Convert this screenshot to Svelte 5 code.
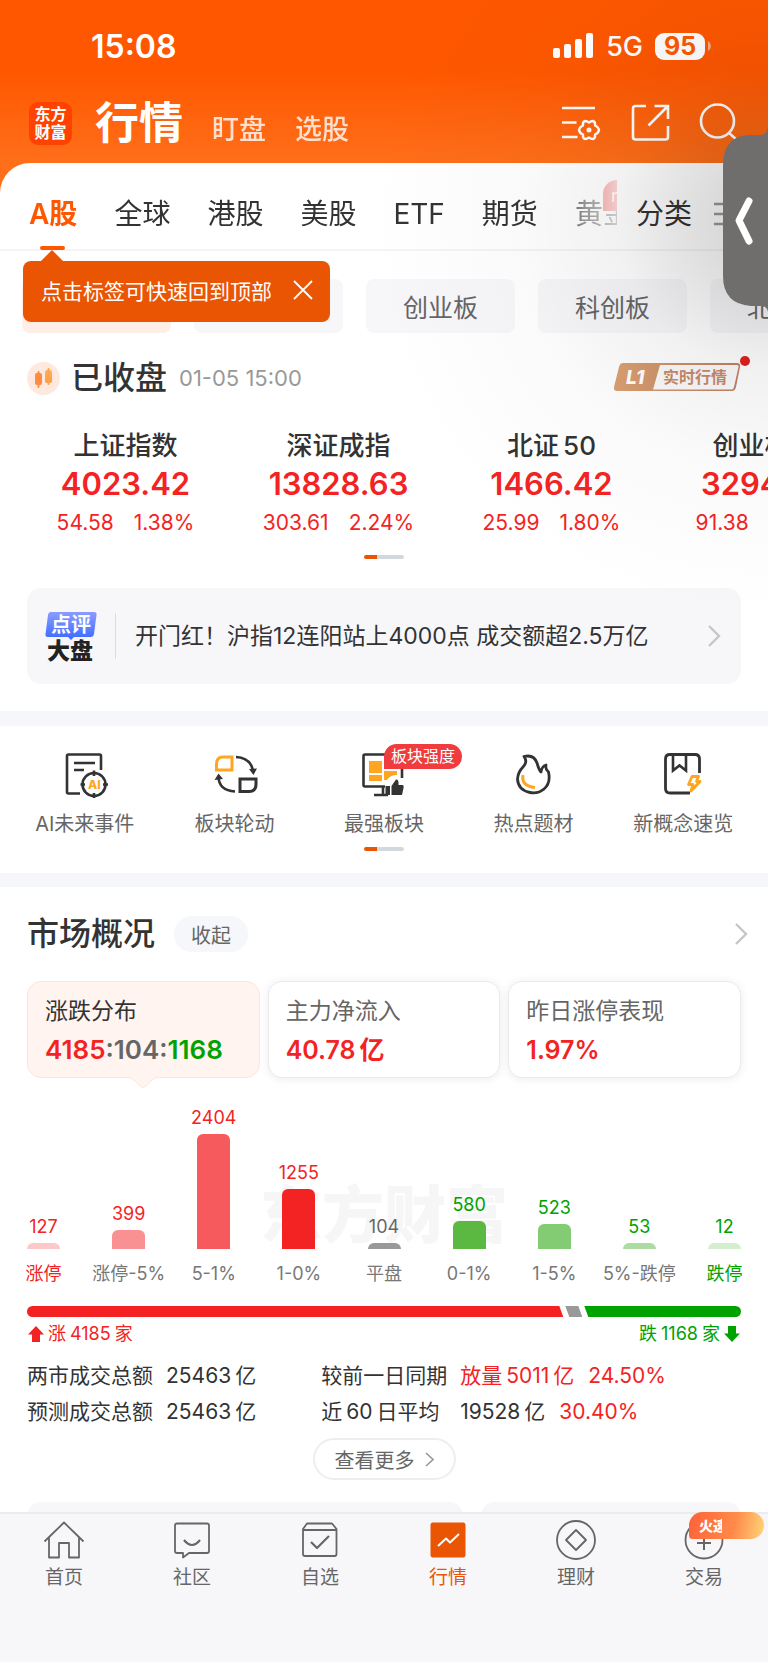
<script>
  const tabs = ['A股', '全球', '港股', '美股', 'ETF', '期货', '黄金'];
  const chips = ['沪深京', '沪深', '创业板', '科创板', '北交所'];
  const indices = [
    { name: ['上证指数'], value: '4023.42', diff: '54.58', pct: '1.38%' },
    { name: ['深证成指'], value: '13828.63', diff: '303.61', pct: '2.24%' },
    { name: ['北证', '50'], value: '1466.42', diff: '25.99', pct: '1.80%' },
    { name: ['创业板指'], value: '3294.55', diff: '91.38', pct: '2.85%' }
  ];
  const tools = [
    { id: 'ai', label: 'AI未来事件' },
    { id: 'rotate', label: '板块轮动' },
    { id: 'strong', label: '最强板块', tag: '板块强度' },
    { id: 'fire', label: '热点题材' },
    { id: 'book', label: '新概念速览' }
  ];
  const bars = [
    { n: 127, h: 6, label: '涨停', color: '#fcc8c8', text: 'up', strong: true },
    { n: 399, h: 19, label: '涨停-5%', color: '#f99193', text: 'up' },
    { n: 2404, h: 115, label: '5-1%', color: '#f75a5c', text: 'up' },
    { n: 1255, h: 60, label: '1-0%', color: '#f42323', text: 'up' },
    { n: 104, h: 6, label: '平盘', color: '#999999', text: 'flat' },
    { n: 580, h: 28, label: '0-1%', color: '#5bb942', text: 'down' },
    { n: 523, h: 25, label: '1-5%', color: '#84cc74', text: 'down' },
    { n: 53, h: 6, label: '5%-跌停', color: '#addca3', text: 'down' },
    { n: 12, h: 6, label: '跌停', color: '#d5eed0', text: 'down', strong: true }
  ];
  const nav = [
    { id: 'home', label: '首页' },
    { id: 'chat', label: '社区' },
    { id: 'pick', label: '自选' },
    { id: 'market', label: '行情' },
    { id: 'wealth', label: '理财' },
    { id: 'trade', label: '交易' }
  ];
  let tip = $state(true);
</script>

<div class="page">
  <header class="top">
    <div class="status">
      <span class="time">15:08</span>
      <div class="signal">
        <svg width="40" height="26" viewBox="0 0 40 26" fill="#fff">
          <rect x="0" y="15" width="7" height="10" rx="2" /><rect x="11" y="11" width="7" height="14" rx="2" />
          <rect x="22" y="6" width="7" height="19" rx="2" /><rect x="33" y="0" width="7" height="25" rx="2" />
        </svg>
        <span class="net">5G</span>
        <span class="battery">95</span>
        <svg width="4" height="10" viewBox="0 0 4 10"><path d="M1 0Q4 2 4 5T1 10z" fill="#fff" opacity=".5" /></svg>
      </div>
    </div>
    <div class="bar">
      <div class="logo"><span>东方</span><span>财富</span></div>
      <nav class="titles">
        <h1>行情</h1>
        <a href="#watch">盯盘</a>
        <a href="#pick">选股</a>
      </nav>
      <div class="actions">
        <button aria-label="设置">
          <svg width="40" height="40" viewBox="0 0 40 40" fill="none" stroke="#fff" stroke-width="2.6">
            <path d="M1 5H34M1 19.500H15.500M1 34H16.500" />
            <path stroke-linejoin="round" stroke-width="2.400" d="M24 18Q26 18 28 19.500Q30 18 32 18Q34.500 18.500 34 22.500Q37.500 24 38 27Q37.500 30 34 31.500Q34.500 35.500 32 36Q30 36 28 34.500Q26 36 24 36Q21.500 35.500 22 31.500Q18.500 30 18 27Q18.500 24 22 22.500Q21.500 18.500 24 18z" />
            <circle cx="28" cy="27" r="1.500" fill="#fff" stroke-width="2" />
          </svg>
        </button>
        <button aria-label="分享">
          <svg width="40" height="40" viewBox="0 0 40 40" fill="none" stroke="#fff" stroke-width="2.600">
            <path stroke-linejoin="round" d="M16 3H5.500Q3 3 3 5.500V34Q3 36.500 5.500 36.500H35.500Q38 36.500 38 34V23" />
            <path d="M24.500 3H38V16M38 3L18.500 22.500" />
          </svg>
        </button>
        <button aria-label="搜索">
          <svg width="40" height="40" viewBox="0 0 40 40" fill="none" stroke="#fff" stroke-width="2.600">
            <circle cx="18.500" cy="18" r="16.500" /><path d="M30 30L38 37" />
          </svg>
        </button>
      </div>
    </div>
  </header>

  <main>
    <div class="sheet">
      <div class="tabrow">
        <nav class="tabs">
          {#each tabs as t, i}
            <a href="#tab{i}" class:active={i === 0}>{t}{#if i === 6}<span class="new">n</span>{/if}</a>
          {/each}
        </nav>
        <a class="sort" href="#sort">分类</a>
        <svg width="30" height="24" viewBox="0 0 30 24" stroke="#999" stroke-width="2.600"><path d="M0 2H26M0 12H26M0 22H26" /></svg>
      </div>
      {#if tip}
        <div class="tip">
          <span>点击标签可快速回到顶部</span>
          <button aria-label="关闭" onclick={() => (tip = false)}>
            <svg width="20" height="20" viewBox="0 0 20 20" stroke="#fff" stroke-width="1.800"><path d="M1 1L19 19M19 1L1 19" /></svg>
          </button>
        </div>
      {/if}
      <div class="chips">
        {#each chips as c, i}<button class:on={i === 0}>{c}</button>{/each}
      </div>
    </div>

    <section class="closing">
      <svg width="33" height="33" viewBox="0 0 33 33">
        <defs>
          <linearGradient id="candle" x1="0" y1="0" x2="0" y2="1"><stop offset="0" stop-color="#ffb35c" /><stop offset="1" stop-color="#ff9a42" /></linearGradient>
        </defs>
        <circle cx="16.500" cy="16.500" r="16.500" fill="#ffe9df" />
        <rect x="8" y="11" width="7" height="12" rx="2" fill="#ff8c40" /><rect x="10.500" y="9" width="2" height="17" rx="1" fill="#ff8c40" />
        <rect x="18" y="8" width="7" height="13" rx="2" fill="url(#candle)" /><rect x="20.500" y="6" width="2" height="17" rx="1" fill="#ffa44c" />
      </svg>
      <h2>已收盘</h2>
      <time>01-05 15:00</time>
      <a class="level" href="#level" aria-label="L1 实时行情">
        <svg width="136" height="36" viewBox="0 0 136 36">
          <defs>
            <linearGradient id="copper"><stop offset="0" stop-color="#dba172" /><stop offset="1" stop-color="#c08063" /></linearGradient>
          </defs>
          <path d="M9 7H123q4 0 3 4L122 31q-1 4-4 4H3Q-1 35 0 31L5 11Q6 7 9 7z" fill="url(#copper)" />
          <path d="M46 9H123q2 0 1.500 2L120 31q-.5 2.500-2.500 2.500H39z" fill="#fafafa" />
          <text x="12" y="28" font-size="19" font-weight="800" font-style="italic" fill="#fff">L1</text>
          <text x="49" y="27" font-size="16" font-weight="700" fill="#c8896a">实时行情</text>
          <circle cx="131" cy="5" r="5" fill="#e02020" />
        </svg>
      </a>
    </section>

    <section class="indices">
      {#each indices as x}
        <a class="index" href="#{x.value}">
          <span class="name">{#each x.name as p}<span>{p}</span>{/each}</span>
          <strong>{x.value}</strong>
          <span class="change"><span>{x.diff}</span><span>{x.pct}</span></span>
        </a>
      {/each}
    </section>
    <div class="pager"></div>

    <a class="notice" href="#review">
      <svg width="52" height="52" viewBox="0 0 52 52">
        <defs>
          <linearGradient id="blue" x1="0" y1="0" x2="0" y2="1"><stop offset="0" stop-color="#8b9cff" /><stop offset="1" stop-color="#3a6bff" /></linearGradient>
        </defs>
        <path d="M6 2H49q3 0 2.500 3L49 24q-.5 3-3.500 3H29l-3 3-3-3H3Q0 27 .5 24L3 5Q3.500 2 6 2z" fill="url(#blue)" />
        <text x="6" y="22" font-size="20" font-weight="700" fill="#fff">点评</text>
        <text x="2" y="49" font-size="23" font-weight="900" fill="#222">大盘</text>
      </svg>
      <p>开门红！沪指12连阳站上4000点 成交额超2.5万亿</p>
      <svg class="chev" width="14" height="22" viewBox="0 0 14 22"><path d="M2 1L12 11L2 21" /></svg>
    </a>

    <section class="tools">
      <div class="toolrow">
        {#each tools as t}
          <a href="#{t.id}">
            <svg width="48" height="48" viewBox="0 0 48 48" fill="none" stroke="#333" stroke-width="2.600">
              {#if t.id === 'ai'}
                <path stroke-linejoin="round" d="M19 43.500H7.500Q6 43.500 6 42V6Q6 4.500 7.500 4.500H38.500Q40 4.500 40 6V20" />
                <path d="M13 13H34M13 20H23" /><circle cx="33" cy="34.500" r="11.500" /><path d="M33 20.500V26M33 43V48M19.500 34.500H24M42 34.500H47" />
                <text x="27" y="39" font-size="12" font-weight="800" fill="#ffa51f" stroke="none">AI</text>
              {:else if t.id === 'rotate'}
                <path stroke="#ffa51f" stroke-width="3" d="M6.500 20V14Q6.500 7 13 7H22V20z" />
                <path stroke-width="3" d="M30 29H46V34Q46 41.500 39 41.500H30z" /><path d="M26 7Q41 8 43 21M25 41.500Q9 40.500 8.500 27" />
                <path fill="#333" stroke="none" d="M39 19L47 18.500L43.500 25zM4.500 30L8.500 23.500L13 29z" />
              {:else if t.id === 'strong'}
                <path d="M25 36.500H5Q3.500 36.500 3.500 35V6Q3.500 4.500 5 4.500H42V28M23 36.500V44.500M14 45H28" />
                <rect x="9" y="11" width="13" height="12" fill="#ffa51f" stroke="none" /><rect x="9" y="25" width="13" height="6" fill="#ffa51f" stroke="none" /><path fill="#ffa51f" stroke="none" d="M24 21H37V25Q30 25 27 30H24z" />
                <path fill="#333" stroke="none" d="M25.500 36H30V45H25.500zM31.500 45V36L36 29.500Q39 29 38.500 35H42.500Q44 35 43.500 38L42 45z" />
              {:else if t.id === 'fire'}
                <path stroke-width="2.800" stroke-linejoin="round" d="M14 6.500Q24 4 27 13Q29 20 31 22Q32 16 36 15Q35 19 38.500 22Q41 33 34 39Q28 44 20 42.500Q8 40 7.500 29Q8 22 13 17Q18 12 14 6.500z" />
                <path stroke="#ffa51f" stroke-width="3" d="M13 25Q11 36 25 37.500" />
              {:else}
                <path stroke-width="2.800" d="M31 43H11Q6.500 43 6.500 38.500V9Q6.500 4.500 11 4.500H36Q40.500 4.500 40.500 9V23" />
                <path d="M14 5V20.500L20.500 15.500L27 20.500V5" /><path stroke="#ffa51f" stroke-width="2.800" stroke-linejoin="round" d="M33 26.500H39.500L37.500 31.500H41L32 41L34 34.500H29.500z" />
              {/if}
            </svg>
            {#if t.tag}<em>{t.tag}</em>{/if}
            <span>{t.label}</span>
          </a>
        {/each}
      </div>
      <div class="pager"></div>
    </section>

    <section class="overview">
      <div class="head">
        <h2>市场概况</h2>
        <button>收起</button>
        <svg class="chev" width="14" height="22" viewBox="0 0 14 22"><path d="M2 1L12 11L2 21" /></svg>
      </div>
      <div class="cards">
        <button class="card on">
          <span>涨跌分布</span>
          <strong><b class="up">4185</b><b class="flat">:104:</b><b class="down">1168</b></strong>
          <svg width="28" height="13" viewBox="0 0 28 13"><path d="M0 0V1.500Q3 2 6 5L11 10Q14 13 17 10L22 5Q25 2 28 1.500V0" fill="#fff4f0" /><path d="M0 1.500Q3 2 6 5L11 10Q14 13 17 10L22 5Q25 2 28 1.500" fill="none" stroke="#fde5da" /></svg>
        </button>
        <button class="card"><span>主力净流入</span><strong class="up unit"><b>40.78</b><b>亿</b></strong></button>
        <button class="card"><span>昨日涨停表现</span><strong class="up">1.97%</strong></button>
      </div>

      <div class="chart">
        <div class="mark">东方财富</div>
        <ul>
          {#each bars as b}
            <li>
              <span class="num {b.text}">{b.n}</span>
              <i style="height:{b.h}px;background:{b.color}"></i>
              <span class="cat {b.strong ? b.text : ''}">{b.label}</span>
            </li>
          {/each}
        </ul>
      </div>

      <div class="ratio">
        <i class="r" style="flex-grow:4185"></i><i class="g"></i><i class="d" style="flex-grow:1168"></i>
      </div>
      <div class="totals">
        <span class="up"><svg width="16" height="16" viewBox="0 0 16 16" fill="#f42323"><path d="M8 0L16 8.500H12V16H4V8.500H0z" /></svg><b>涨</b><b>4185</b><b>家</b></span>
        <span class="down"><b>跌</b><b>1168</b><b>家</b><svg width="16" height="16" viewBox="0 0 16 16" fill="#00a200"><path d="M8 16L0 7.500H4V0H12V7.500H16z" /></svg></span>
      </div>

      <table>
        <tbody>
          <tr><th>两市成交总额</th><td class="first"><b>25463</b>亿</td><th>较前一日同期</th><td class="up">放量<b class="l">5011</b>亿<span>24.50%</span></td></tr>
          <tr><th>预测成交总额</th><td class="first"><b>25463</b>亿</td><th>近<b class="l">60</b>日平均</th><td><b>19528</b>亿<span class="up">30.40%</span></td></tr>
        </tbody>
      </table>
      <button class="more">查看更多<svg width="9" height="15" viewBox="0 0 9 15"><path d="M1 1L8 7.500L1 14" /></svg></button>
      <div class="peek"><i></i><i></i></div>
    </section>
  </main>

  <nav class="bottom">
    {#each nav as n}
      <a href="#{n.id}" class:active={n.id === 'market'}>
        <svg width="42" height="42" viewBox="0 0 42 42" fill="none" stroke="#666" stroke-width="1.800" stroke-linejoin="round">
          {#if n.id === 'home'}
            <path d="M1.500 22.500L21 3.500L40.500 22.500M6 18.500V38.500H16V24H26V38.500H36V18.500" />
          {:else if n.id === 'chat'}
            <path d="M6 4.500H36Q38 4.500 38 6.500V32Q38 34 36 34H18L12 38.500V34H6Q4 34 4 32V6.500Q4 4.500 6 4.500z" /><path stroke-width="2.200" d="M13 21Q21 31 29 21" />
          {:else if n.id === 'pick'}
            <path d="M8 4.500H33L37.500 10V35Q37.500 37 35.500 37H6Q4 37 4 35V10zM4 11H37.500" /><path stroke-width="2.200" d="M12 23L18 29L30 17" />
          {:else if n.id === 'market'}
            <rect x="4" y="4" width="34" height="34" rx="1.500" fill="#ea5504" stroke="#ea5504" stroke-width="1" /><path stroke="#fff" stroke-width="2" d="M11 27L19 19.500L23 23.500L32 15" />
          {:else if n.id === 'wealth'}
            <circle cx="21" cy="21" r="19" /><path d="M21 11L31 21L21 31L11 21z" />
          {:else}
            <circle cx="21" cy="21" r="18.500" /><path stroke-width="2" d="M14 17H28M14 24H28M21 15V31" />
          {/if}
        </svg>
        {#if n.id === 'trade'}<em><b>火</b><b class="half">速</b></em>{/if}
        <span>{n.label}</span>
      </a>
    {/each}
  </nav>

  <div class="shade"></div>
  <button class="handle" aria-label="展开">
    <svg width="45" height="190" viewBox="0 0 45 190">
      <path fill="#706e6d" d="M45 0Q44 9 38 9H26Q0 10 0 40V150Q0 178 28 180H38Q44 180 45 186z" />
      <path d="M26 75L16 94.500L26 115" fill="none" stroke="#fff" stroke-width="7" stroke-linecap="round" stroke-linejoin="round" />
    </svg>
  </button>
</div>

<style>
  :global(body) { margin: 0; background: #fff; }
  .page { position: relative; min-height: 100vh; display: flex; flex-direction: column; overflow: hidden; background: #fff; color: #333; font-family: Inter, 'Noto Sans CJK SC', sans-serif; }
  a { color: inherit; text-decoration: none; }
  button { border: 0; padding: 0; background: none; color: inherit; font: inherit; cursor: pointer; }
  h1, h2, p, ul { margin: 0; padding: 0; list-style: none; }
  svg { display: block; flex: none; }
  b { font-weight: inherit; }
  .up { color: #f42323; }
  .down { color: #00a200; }
  .flat { color: #666; }

  .top { color: #fff; background: linear-gradient(#ff5700 0, #ff5700 70px, #ff6f1a 163px); padding-bottom: 36px; }
  .status { height: 92px; display: flex; align-items: center; justify-content: space-between; padding: 0 57px 2px 91px; }
  .time { font-size: 32px; font-weight: 600; }
  .signal { display: flex; align-items: center; }
  .net { font-size: 27px; font-weight: 500; margin: 0 12px 0 13px; }
  .battery { width: 50px; height: 27px; line-height: 27px; border-radius: 9px; background: #fff; color: #ff5700; text-align: center; font-size: 25px; font-weight: 700; margin-right: 2px; }
  .bar { height: 58px; margin-bottom: 11px; display: flex; align-items: center; padding: 0 29px; }
  .logo { width: 43px; height: 43px; border-radius: 9px; background: #ff4200; display: flex; flex-direction: column; align-items: center; justify-content: center; font-size: 16px; line-height: 18px; font-weight: 700; }
  .titles { flex: 1; display: flex; align-items: baseline; gap: 29px; margin-left: 23px; font-size: 27px; font-weight: 500; }
  .titles a { opacity: .8; }
  h1 { font-size: 44px; line-height: 58px; font-weight: 700; }
  .actions { display: flex; gap: 29px; }

  main { position: relative; margin-top: -36px; }
  .sheet { position: relative; background: #fff; border-radius: 30px 0 0 0; }
  .tabrow { display: flex; align-items: center; height: 70px; padding-top: 16px; border-bottom: 2px solid #f4f4f5; font-size: 28px; }
  .tabs { width: 588px; height: 87px; box-sizing: border-box; padding-top: 16px; margin: -16px 0 0 29px; flex: none; display: flex; align-items: center; gap: 37px; overflow: hidden; white-space: nowrap; mask-image: linear-gradient(90deg, #000 530px, rgba(0,0,0,.5) 555px, rgba(0,0,0,.2) 588px); }
  .tabs a { position: relative; line-height: 71px; }
  .tabs .active { color: #ff5700; font-weight: 600; }
  .tabs .active::after { content: ''; position: absolute; left: 50%; bottom: 0; width: 25px; height: 4px; margin-left: -13px; border-radius: 2px; background: #ff5700; }
  .new { position: absolute; left: 28px; top: 1px; width: 50px; height: 31px; line-height: 31px; padding-left: 8px; box-sizing: border-box; border-radius: 14px 14px 14px 0; background: #f0302f; color: #fff; font-size: 18px; }
  .sort { margin-left: 19px; margin-right: 22px; white-space: nowrap; line-height: 70px; }
  .tip { position: absolute; left: 23px; top: 98px; width: 307px; height: 61px; padding: 0 17px 3px 18px; box-sizing: border-box; display: flex; align-items: center; justify-content: space-between; border-radius: 8px; background: #ea5504; color: #fff; font-size: 21px; white-space: nowrap; }
  .tip::before { content: ''; position: absolute; left: 18px; top: -11px; border: solid transparent; border-width: 0 11px 11px; border-bottom-color: #ea5504; }
  .chips { display: flex; gap: 23px; padding: 28px 0 0 22px; overflow: hidden; }
  .chips button { flex: 0 0 149px; height: 54px; border-radius: 8px; background: #f7f7fa; color: #666; font-size: 25px; }
  .chips .on { background: #ffeee6; color: #ea5504; }

  .closing { display: flex; align-items: center; height: 44px; margin-top: 23px; padding: 0 18px 0 27px; }
  h2 { font-size: 32px; line-height: 44px; font-weight: 500; }
  .closing h2 { margin-left: 11px; }
  time { flex: 1; margin-left: 12px; font-size: 22px; color: #999; }
  .level { margin-top: -8px; }

  .indices { display: flex; overflow: hidden; padding-left: 19px; margin-top: 27px; }
  .index { flex: 0 0 213px; display: flex; flex-direction: column; align-items: center; }
  .name { display: flex; gap: 4px; font-size: 26px; line-height: 38px; font-weight: 500; }
  .index strong { font-size: 31px; line-height: 38px; font-weight: 600; color: #f42323; }
  .change { display: flex; gap: 20px; font-size: 21px; line-height: 40px; color: #f42323; }
  .pager { width: 40px; height: 4px; border-radius: 2px; margin: 12px auto 0; background: linear-gradient(90deg, #ea5504 13px, #d3d7de 13px); }

  .notice { display: flex; align-items: center; height: 96px; margin: 29px 27px 27px; padding: 0 20px 0 18px; border-radius: 14px; background: #f7f7fa; font-size: 23px; }
  .notice p { flex: 1; margin-left: 18px; padding-left: 19px; line-height: 46px; border-left: 1px solid #dcdcdf; white-space: nowrap; }
  .chev { fill: none; stroke: #c6c6c6; stroke-width: 2.4; }

  .tools { border: solid #f5f7fa; border-width: 15px 0 14px; padding: 24px 0 22px; }
  .toolrow { display: flex; padding: 0 10px; }
  .toolrow a { position: relative; flex: 1 1 0; display: flex; flex-direction: column; align-items: center; font-size: 20px; line-height: 30px; color: #666; white-space: nowrap; }
  .toolrow a > span { margin-top: 11px; }
  .toolrow em { position: absolute; left: 50%; top: -6px; padding: 0 7px; line-height: 25px; border-radius: 13px 13px 13px 0; background: #f03c3f; color: #fff; font-size: 16px; font-style: normal; }
  .toolrow + .pager { margin-top: 8px; }

  .overview { padding: 0 27px; }
  .head { display: flex; align-items: center; height: 94px; margin-right: -7px; }
  .head button { margin: 0 auto 0 19px; padding: 0 17px; height: 36px; border-radius: 18px; background: #f5f7fa; color: #666; font-size: 20px; }
  .cards { display: grid; grid-template-columns: repeat(3, 1fr); gap: 8px; }
  .card { position: relative; height: 97px; padding: 10px 17px 0; display: flex; flex-direction: column; border: 1px solid #ebebeb; border-radius: 14px; background: #fff; box-shadow: 0 1px 10px rgba(0,0,0,.08); color: #666; font-size: 23px; line-height: 38px; text-align: left; white-space: nowrap; }
  .card.on { background: #fff4f0; border-color: #fde5da; box-shadow: none; color: #333; }
  .card strong { display: flex; font-size: 25px; line-height: 40px; font-weight: 600; }
  .card.on strong { font-size: 26px; }
  .card .unit { gap: 4px; }
  .card svg { position: absolute; left: 50%; bottom: -12px; margin-left: -14px; }

  .chart { position: relative; height: 206px; display: flex; align-items: flex-end; }
  .mark { position: absolute; left: 0; right: 0; top: 94px; text-align: center; color: #f6f6f6; font-size: 62px; line-height: 88px; font-weight: 900; }
  .chart ul { position: relative; flex: 1; display: flex; justify-content: space-between; align-items: flex-end; }
  .chart li { width: 33px; display: flex; flex-direction: column; align-items: center; white-space: nowrap; line-height: 20px; }
  .chart i { width: 100%; border-radius: 6px 6px 0 0; }
  .num { margin-bottom: 6px; font-size: 18px; }
  .cat { margin-top: 15px; font-size: 18px; }
  .cat:not(.up):not(.down) { color: #777; }

  .ratio { display: flex; height: 11px; margin-top: 22px; gap: 2px; }
  .r { background: #f42323; border-radius: 6px 0 0 6px; clip-path: polygon(0 0, calc(100% - 4px) 0, 100% 100%, 0 100%); }
  .g { width: 17px; background: #999; clip-path: polygon(0 0, 13px 0, 100% 100%, 4px 100%); }
  .d { flex-basis: 7px; background: #00a200; border-radius: 0 6px 6px 0; clip-path: polygon(0 0, 100% 0, 100% 100%, 4px 100%); }
  .totals { display: flex; justify-content: space-between; margin-top: 7px; font-size: 18px; line-height: 20px; }
  .totals span { display: flex; align-items: center; gap: 4px; padding: 0 1px; }

  table { margin-top: 14px; border-collapse: collapse; font-size: 21px; line-height: 36px; white-space: nowrap; }
  th { padding: 0 13px 0 0; font-weight: 400; text-align: left; }
  td { padding: 0; }
  .first { padding-right: 65px; }
  td b, th b { margin-right: 4px; }
  .l { margin-left: 4px; }
  td span { margin-left: 14px; }
  .more { display: flex; align-items: center; justify-content: center; gap: 10px; width: 143px; height: 42px; margin: 8px auto 22px; border: 2px solid #eee; border-radius: 21px; color: #666; font-size: 20px; }
  .more svg { fill: none; stroke: #999; stroke-width: 1.6; }
  .peek { display: grid; grid-template-columns: 436fr 260fr; gap: 18px; height: 10px; overflow: hidden; }
  .peek i { height: 40px; border-radius: 14px; background: #f7f7fa; }

  .bottom { position: relative; flex: 1; display: flex; align-items: flex-start; min-height: 130px; border-top: 2px solid #ececef; background: #f7f7fa; padding-top: 5px; }
  .bottom a { position: relative; flex: 1 1 0; display: flex; flex-direction: column; align-items: center; color: #666; font-size: 19px; line-height: 28px; }
  .bottom a > span { margin-top: 3px; }
  .bottom .active { color: #ea5504; }
  .bottom em { position: absolute; left: 50%; top: -7px; width: 75px; height: 27px; margin-left: -15px; padding-left: 10px; box-sizing: border-box; display: flex; border-radius: 14px 14px 14px 4px; background: linear-gradient(100deg, #ff6238, #ff8a4a 60%, #ffd678); color: #fff; font-size: 14px; line-height: 27px; font-style: normal; font-weight: 900; }
  .half { width: 9px; overflow: hidden; }

  .shade { position: absolute; top: 0; right: 0; width: 440px; height: 700px; pointer-events: none; background: radial-gradient(circle at 440px 220px, rgba(0,0,0,.19) 0, rgba(0,0,0,.12) 80px, rgba(0,0,0,.055) 150px, rgba(0,0,0,.02) 250px, transparent 400px); }
  .handle { position: absolute; right: 0; top: 126px; }
</style>
